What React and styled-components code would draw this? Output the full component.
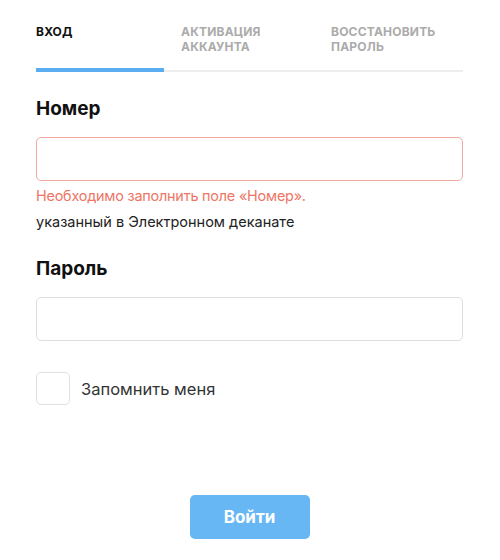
import React from "react";
import styled, { createGlobalStyle } from "styled-components";

const Global = createGlobalStyle`
  html, body { margin: 0; padding: 0; background: #fff; }
  body { font-family: "Inter", "Noto Sans", sans-serif; color: #1a1a1a; }
  * { box-sizing: border-box; }
`;

const Page = styled.div`
  width: 500px;
  padding: 24px 37px 20px 36px;
`;

const TabList = styled.div`
  display: flex;
  gap: 17px;
  border-bottom: 2px solid #eeeeee;
`;

const Tab = styled.div`
  width: ${(p) => p.$w}px;
  flex: ${(p) => (p.$grow ? "1" : "none")};
  height: ${(p) => (p.$active ? 48 : 46)}px;
  margin-bottom: ${(p) => (p.$active ? -2 : 0)}px;
  border-bottom: ${(p) => (p.$active ? "4px solid #5aadf0" : "none")};
  font-size: 12px;
  line-height: 15px;
  font-weight: 700;
  letter-spacing: 0.2px;
  text-transform: uppercase;
  color: ${(p) => (p.$active ? "#111" : "#ababab")};
`;

const Label = styled.div`
  margin-top: ${(p) => p.$mt}px;
  font-size: 19px;
  line-height: 24px;
  font-weight: 700;
  color: #111;
`;

const Input = styled.input`
  display: block;
  width: 100%;
  height: 44px;
  margin-top: 16px;
  border: 1px solid ${(p) => (p.$error ? "#f3a89f" : "#dedede")};
  border-radius: 5px;
  outline: none;
  font: inherit;
  padding: 0 12px;
`;

const ErrorText = styled.div`
  margin-top: 5px;
  font-size: 14.4px;
  line-height: 20px;
  letter-spacing: -0.2px;
  color: #ee7566;
`;

const Hint = styled.div`
  margin-top: 6px;
  font-size: 14.5px;
  line-height: 20px;
  color: #222;
`;

const CheckRow = styled.label`
  display: flex;
  align-items: center;
  gap: 11px;
  margin-top: 31px;
`;

const Box = styled.span`
  width: 34px;
  height: 33px;
  border: 1px solid #e0e0e0;
  border-radius: 5px;
  flex: none;
`;

const CheckText = styled.span`
  font-size: 16.5px;
  color: #333;
`;

const Actions = styled.div`
  display: flex;
  justify-content: center;
  margin-top: 90px;
`;

const Button = styled.button`
  width: 120px;
  height: 44px;
  border: none;
  border-radius: 5px;
  background: #67b7f5;
  color: #fff;
  font: inherit;
  font-size: 17px;
  font-weight: 700;
`;

export default function App() {
  return (
    <Page>
      <Global />
      <TabList>
        <Tab $w={128} $active>Вход</Tab>
        <Tab $w={133}>Активация аккаунта</Tab>
        <Tab $grow>Восстановить пароль</Tab>
      </TabList>
      <Label $mt={25}>Номер</Label>
      <Input $error />
      <ErrorText>Необходимо заполнить поле «Номер».</ErrorText>
      <Hint>указанный в Электронном деканате</Hint>
      <Label $mt={25}>Пароль</Label>
      <Input type="password" />
      <CheckRow>
        <Box />
        <CheckText>Запомнить меня</CheckText>
      </CheckRow>
      <Actions>
        <Button>Войти</Button>
      </Actions>
    </Page>
  );
}
